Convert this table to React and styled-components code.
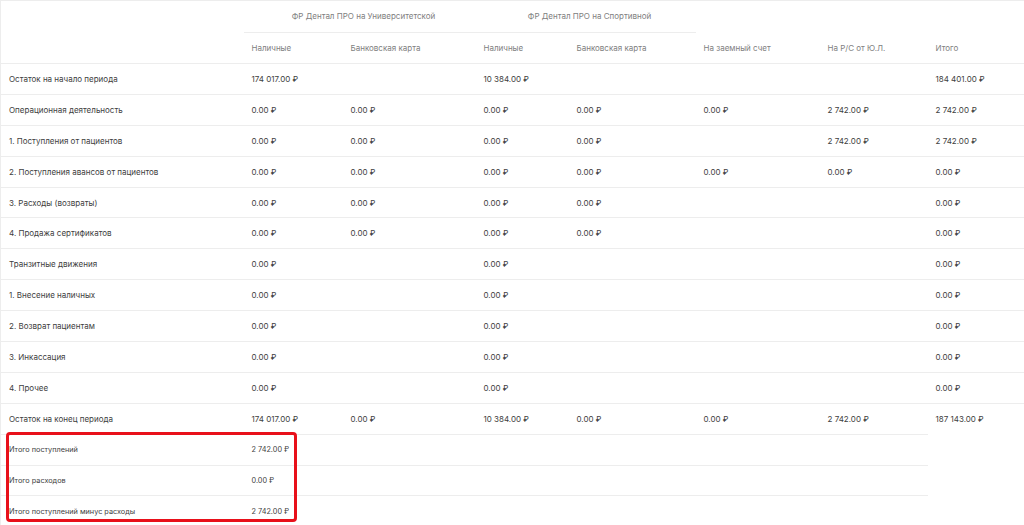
import React from 'react';
import styled, { createGlobalStyle } from 'styled-components';

const GlobalStyle = createGlobalStyle`
  html, body {
    margin: 0;
    padding: 0;
    background: #ffffff;
  }
  body {
    font-family: Inter, "Noto Sans", sans-serif;
  }
`;

const Wrapper = styled.div`
  position: relative;
  width: 1024px;
  height: 525px;
  overflow: hidden;
  background: #fff;
`;

const Table = styled.table`
  width: 1024px;
  border-collapse: collapse;
  table-layout: fixed;
  border-top: 1px solid #ededed;
  border-left: 1px solid #ededed;
  font-size: 8px;
  color: #404040;
`;

const HeadCell = styled.th`
  height: 30.5px;
  padding: 0 0 0 8px;
  font-weight: 400;
  text-align: ${p => (p.$center ? 'center' : 'left')};
  color: #808080;
  white-space: nowrap;
  border-bottom: ${p => (p.$line ? '1px solid #ededed' : 'none')};
`;

const Row = styled.tr`
  height: 30.9px;
  font-size: ${p => (p.$small ? '7.3px' : '8px')};
`;

const Cell = styled.td`
  padding: 0 0 0 8px;
  white-space: nowrap;
  border-top: ${p => (p.$noLine ? 'none' : '1px solid #ededed')};
`;

const Highlight = styled.div`
  position: absolute;
  left: 6px;
  top: 432px;
  width: 285px;
  height: 84px;
  border: 3px solid #e8101a;
  border-radius: 4px;
  pointer-events: none;
`;

const widths = [243, 99, 133, 93, 127, 124, 108, 97];

const columns = ['Наличные', 'Банковская карта', 'Наличные', 'Банковская карта', 'На заемный счет', 'На Р/С от Ю.Л.', 'Итого'];

const Z = '0.00 ₽';

const rows = [
  ['Остаток на начало периода', '174 017.00 ₽', '', '10 384.00 ₽', '', '', '', '184 401.00 ₽'],
  ['Операционная деятельность', Z, Z, Z, Z, Z, '2 742.00 ₽', '2 742.00 ₽'],
  ['1. Поступления от пациентов', Z, Z, Z, Z, '', '2 742.00 ₽', '2 742.00 ₽'],
  ['2. Поступления авансов от пациентов', Z, Z, Z, Z, Z, Z, Z],
  ['3. Расходы (возвраты)', Z, Z, Z, Z, '', '', Z],
  ['4. Продажа сертификатов', Z, Z, Z, Z, '', '', Z],
  ['Транзитные движения', Z, '', Z, '', '', '', Z],
  ['1. Внесение наличных', Z, '', Z, '', '', '', Z],
  ['2. Возврат пациентам', Z, '', Z, '', '', '', Z],
  ['3. Инкассация', Z, '', Z, '', '', '', Z],
  ['4. Прочее', Z, '', Z, '', '', '', Z],
  ['Остаток на конец периода', '174 017.00 ₽', Z, '10 384.00 ₽', Z, Z, '2 742.00 ₽', '187 143.00 ₽'],
];

const totals = [
  ['Итого поступлений', '2 742.00 ₽'],
  ['Итого расходов', Z],
  ['Итого поступлений минус расходы', '2 742.00 ₽'],
];

export default function App() {
  return (
    <Wrapper>
      <GlobalStyle />
      <Table>
        <colgroup>
          {widths.map((w, i) => (
            <col key={i} style={{ width: w }} />
          ))}
        </colgroup>
        <thead>
          <tr>
            <HeadCell rowSpan={2} />
            <HeadCell colSpan={2} $center $line>ФР Дентал ПРО на Университетской</HeadCell>
            <HeadCell colSpan={2} $center $line>ФР Дентал ПРО на Спортивной</HeadCell>
            <HeadCell colSpan={3} />
          </tr>
          <tr>
            {columns.map((c, i) => (
              <HeadCell key={i}>{c}</HeadCell>
            ))}
          </tr>
        </thead>
        <tbody>
          {rows.map((r, i) => (
            <Row key={i}>
              {r.map((v, j) => (
                <Cell key={j}>{v}</Cell>
              ))}
            </Row>
          ))}
          {totals.map((t, i) => (
            <Row key={'t' + i} $small>
              <Cell>{t[0]}</Cell>
              <Cell>{t[1]}</Cell>
              <Cell />
              <Cell />
              <Cell />
              <Cell />
              <Cell />
              <Cell $noLine />
            </Row>
          ))}
        </tbody>
      </Table>
      <Highlight />
    </Wrapper>
  );
}
